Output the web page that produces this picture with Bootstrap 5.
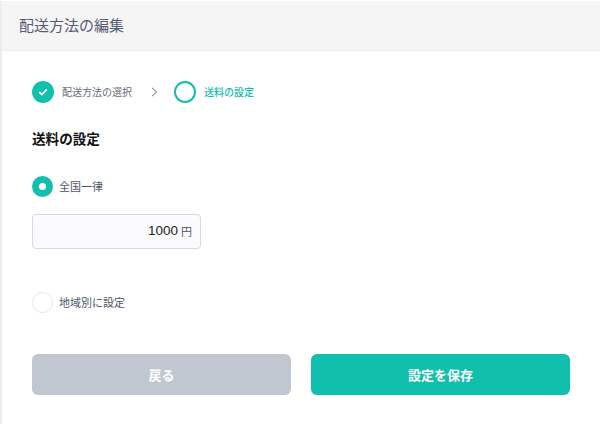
<!DOCTYPE html>
<html lang="ja"><head><meta charset="utf-8">
<link href="https://cdn.jsdelivr.net/npm/bootstrap@5.3.0/dist/css/bootstrap.min.css" rel="stylesheet">
<style>
html,body{height:100%;}
body{font-family:"Noto Sans CJK JP","Noto Sans",sans-serif;background:#fff;color:#4a5068;overflow:hidden;}
.shell{height:424px;border-left:2px solid #ecedf3;}
.head-bar{height:50px;margin-top:1px;background:#f5f5f6;border-bottom:1px solid #ededef;padding-left:17px;font-size:15px;color:#565c74;line-height:47px;}
.body-pane{padding:29px 30px 0 30px;}
.step-dot{width:22px;height:22px;border-radius:50%;background:#12bfad;}
.step-ring{width:22px;height:22px;border-radius:50%;border:2px solid #12bfad;background:#fff;}
.step-text{font-size:10px;line-height:14px;color:#666b7d;}
.step-on{color:#12bfad;font-weight:500;}
.step-sep{margin:0 16px 0 19px;}
.sect-title{font-size:13.6px;font-weight:700;color:#111;line-height:20px;margin-top:24px;}
.radio-row{height:22px;gap:6px;font-size:11px;color:#4f5468;}
.radio-on{width:21px;height:21px;border-radius:50%;background:#12bfad;display:flex;align-items:center;justify-content:center;}
.radio-on i{display:block;width:7px;height:7px;border-radius:50%;background:#fff;}
.radio-off{width:21px;height:21px;border-radius:50%;border:1px solid #e4e6ea;background:#fff;}
.amount-box{width:169px;height:35px;border:1px solid #d5d9e0;border-radius:4px;background:#fbfbfd;padding-right:8px;color:#222;}
.amount-num{font-family:"Liberation Sans",sans-serif;font-size:13.5px;}
.amount-unit{font-size:11px;color:#4f5468;margin-left:3px;}
.act-btn{height:41px;border-radius:6px;border:0;color:#fff;font-size:13px;font-weight:700;width:259px;padding:0;}
.act-back,.act-back:disabled{background:#c1c7d1;color:#fff;opacity:1;}
.act-save,.act-save:hover{background:#11bfad;color:#fff;}
.gap-a{margin-top:27px;}
.gap-b{margin-top:17px;}
.gap-c{margin-top:42px;}
.gap-d{margin-top:41px;gap:20px;}
</style></head>
<body>
<div class="shell">
  <div class="head-bar">配送方法の編集</div>
  <div class="body-pane">
    <div class="d-flex align-items-center" style="height:24px">
      <span class="step-dot d-flex align-items-center justify-content-center">
        <svg width="10" height="8" viewBox="0 0 10 8" fill="none"><path d="M1.2 4.2 3.8 6.6 8.8 1.4" stroke="#fff" stroke-width="1.6"/></svg>
      </span>
      <span class="step-text ms-2">配送方法の選択</span>
      <svg class="step-sep" width="7" height="10" viewBox="0 0 7 10" fill="none"><path d="M1 .8 5.6 5 1 9.2" stroke="#666b7d" stroke-width="1"/></svg>
      <span class="step-ring"></span>
      <span class="step-text step-on ms-2">送料の設定</span>
    </div>
    <div class="sect-title">送料の設定</div>
    <div class="d-flex align-items-center radio-row gap-a"><span class="radio-on"><i></i></span>全国一律</div>
    <div class="amount-box d-flex align-items-center justify-content-end gap-b"><span class="amount-num">1000</span><span class="amount-unit">円</span></div>
    <div class="d-flex align-items-center radio-row gap-c"><span class="radio-off"></span>地域別に設定</div>
    <div class="d-flex gap-d">
      <button class="btn act-btn act-back" type="button">戻る</button>
      <button class="btn act-btn act-save" type="button">設定を保存</button>
    </div>
  </div>
</div>
<script src="https://cdn.jsdelivr.net/npm/bootstrap@5.3.0/dist/js/bootstrap.bundle.min.js"></script>
</body></html>
